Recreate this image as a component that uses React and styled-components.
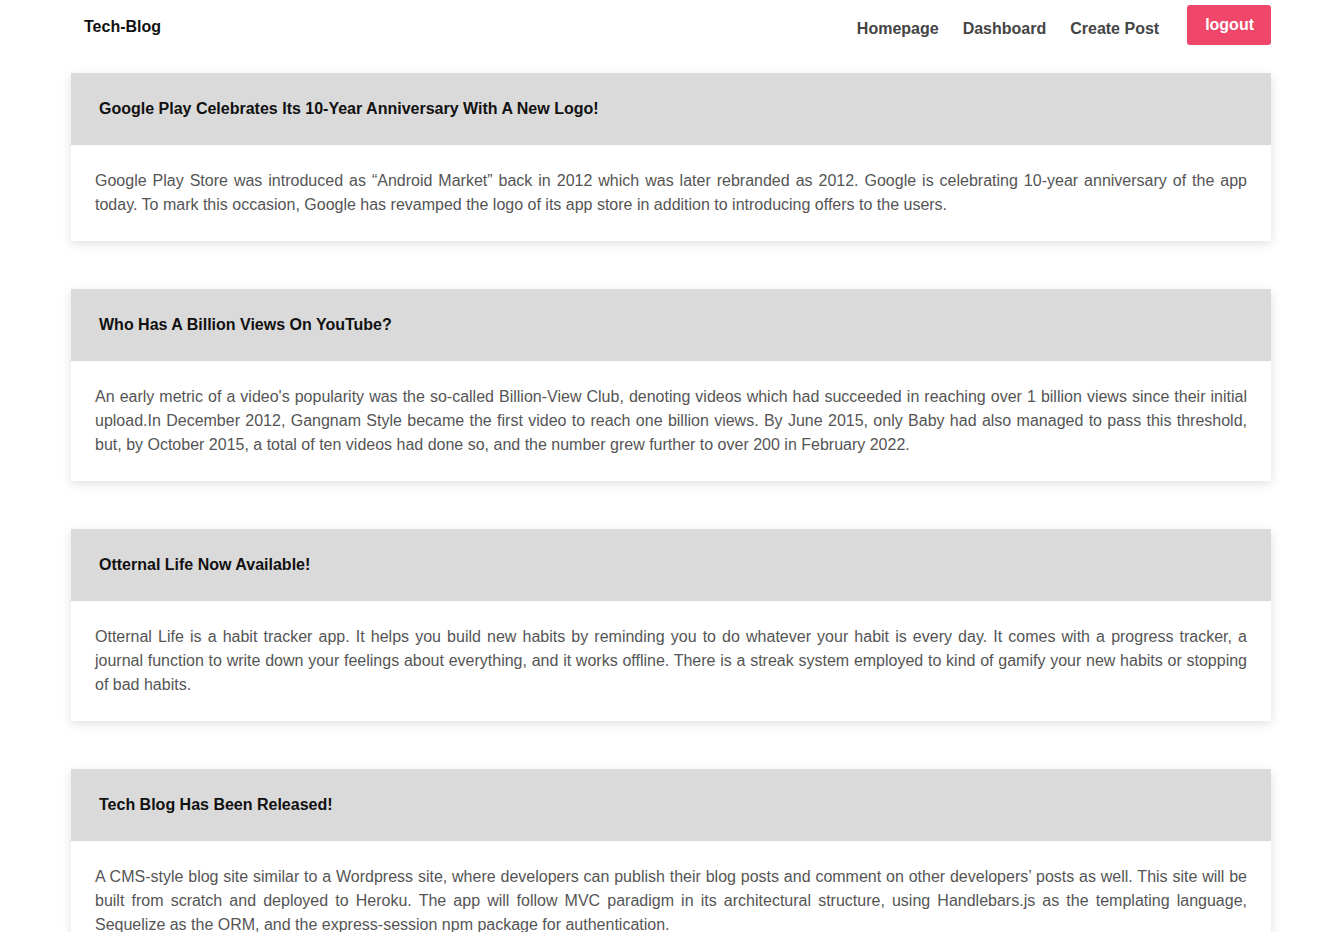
import styled, { createGlobalStyle } from 'styled-components';

const GlobalStyle = createGlobalStyle`
  body {
    margin: 0;
    font-family: "Liberation Sans", Arial, sans-serif;
    background: #fff;
  }
`;

const posts = [
  {
    id: 1,
    title: 'Google Play Celebrates Its 10-Year Anniversary With A New Logo!',
    body: 'Google Play Store was introduced as \u201cAndroid Market\u201d back in 2012 which was later rebranded as 2012. Google is celebrating 10-year anniversary of the app today. To mark this occasion, Google has revamped the logo of its app store in addition to introducing offers to the users.',
  },
  {
    id: 2,
    title: 'Who Has A Billion Views On YouTube?',
    body: "An early metric of a video's popularity was the so-called Billion-View Club, denoting videos which had succeeded in reaching over 1 billion views since their initial upload.In December 2012, Gangnam Style became the first video to reach one billion views. By June 2015, only Baby had also managed to pass this threshold, but, by October 2015, a total of ten videos had done so, and the number grew further to over 200 in February 2022.",
  },
  {
    id: 3,
    title: 'Otternal Life Now Available!',
    body: 'Otternal Life is a habit tracker app. It helps you build new habits by reminding you to do whatever your habit is every day. It comes with a progress tracker, a journal function to write down your feelings about everything, and it works offline. There is a streak system employed to kind of gamify your new habits or stopping of bad habits.',
  },
  {
    id: 4,
    title: 'Tech Blog Has Been Released!',
    body: 'A CMS-style blog site similar to a Wordpress site, where developers can publish their blog posts and comment on other developers\u2019 posts as well. This site will be built from scratch and deployed to Heroku. The app will follow MVC paradigm in its architectural structure, using Handlebars.js as the templating language, Sequelize as the ORM, and the express-session npm package for authentication.',
  },
];

const App = () => {
  return (
    <>
      <GlobalStyle />
      <Nav>
        <Brand>Tech-Blog</Brand>
        <Links>
          <NavLink href="#">Homepage</NavLink>
          <NavLink href="#">Dashboard</NavLink>
          <NavLink href="#">Create Post</NavLink>
          <Logout>logout</Logout>
        </Links>
      </Nav>
      <Main>
        {posts.map((post) => (
          <Card key={post.id}>
            <CardHeader>{post.title}</CardHeader>
            <CardBody>{post.body}</CardBody>
          </Card>
        ))}
      </Main>
    </>
  );
};

const Nav = styled.header`
  display: flex;
  align-items: center;
  justify-content: space-between;
  height: 52px;
  padding: 0 49px 0 84px;
`;

const Brand = styled.div`
  font-size: 16px;
  font-weight: 700;
  color: #111;
  margin-top: 1px;
`;

const Links = styled.nav`
  display: flex;
  align-items: center;
  gap: 24px;
`;

const NavLink = styled.a`
  font-size: 16px;
  font-weight: 700;
  color: #444;
  text-decoration: none;
  margin-top: 6px;
`;

const Logout = styled.button`
  margin-left: 4px;
  height: 40px;
  padding: 0 17px 0 18px;
  border: none;
  border-radius: 3px;
  background: #f0466a;
  color: #fff;
  font-family: inherit;
  font-size: 16px;
  font-weight: 700;
  margin-top: -2px;
`;

const Main = styled.main`
  display: flex;
  flex-direction: column;
  gap: 48px;
  padding: 21px 49px 48px 71px;
`;

const Card = styled.article`
  background: #fff;
  box-shadow: 0 3px 10px rgba(0, 0, 0, 0.12);
`;

const CardHeader = styled.h2`
  margin: 0;
  height: 72px;
  display: flex;
  align-items: center;
  padding: 0 28px;
  background: #dadada;
  font-size: 16px;
  font-weight: 700;
  color: #111;
`;

const CardBody = styled.p`
  margin: 0;
  padding: 24px;
  font-size: 16px;
  line-height: 24px;
  color: #555;
  text-align: justify;
`;

export default App;
